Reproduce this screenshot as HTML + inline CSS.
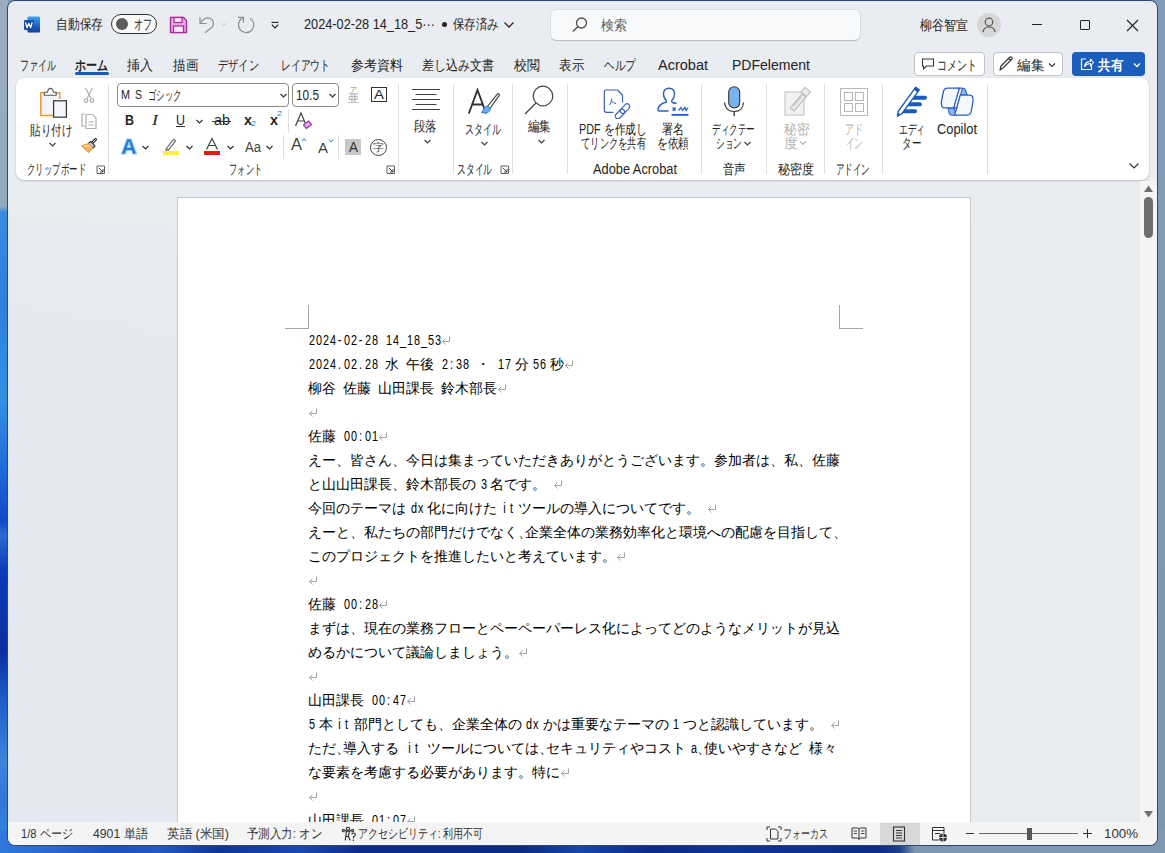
<!DOCTYPE html><html lang="ja"><head><meta charset="utf-8"><title>Word</title>
<style>
*{margin:0;padding:0;box-sizing:border-box}
html,body{width:1165px;height:853px;overflow:hidden}
body{position:relative;font-family:"Liberation Sans",sans-serif;color:#242424;font-size:14px;
 background:#7f9bb3}
.abs{position:absolute}
#deskL{position:absolute;left:0;top:0;width:8px;height:853px;background:linear-gradient(180deg,#98adbf 0px,#93aabf 206px,#3a8ae0 212px,#2d80dc 300px,#3590e2 400px,#1f6ad8 470px,#1248c8 520px,#2a6ad0 535px,#0c3ab8 570px,#0a2fa0 650px,#1e5cc8 700px,#3a86dc 760px,#2e78d8 800px,#3a88e0 853px)}
#deskB{position:absolute;left:0;top:830px;width:1165px;height:23px;background:linear-gradient(90deg,#2f78dc 0px,#2a68d0 50px,#1c50bc 110px,#2358c0 160px,#0f3496 220px,#1a48b0 300px,#0c2c8c 360px,#0a2a86 470px,#0b2a80 520px,#1646aa 580px,#0a2a88 650px,#0e3494 730px,#0b2c88 880px,#1b3f8a 900px,#7c96ae 915px,#7f9ab0 1165px)}
#deskR{position:absolute;left:1157px;top:0;width:8px;height:853px;background:linear-gradient(180deg,#7f9db5,#7a97ae)}
#win{position:absolute;left:7px;top:0;width:1151px;height:846px;border:1px solid #2c4876;border-radius:8px;
 background:#e9ecf0;overflow:hidden}
#ribbon{position:absolute;left:16px;top:78px;width:1133px;height:102px;background:#fff;border-radius:8px;
 box-shadow:0 1px 2px rgba(0,0,0,.18),0 0 1px rgba(0,0,0,.12)}
#clip{position:absolute;left:8px;top:181px;width:1132px;height:641px;overflow:hidden}
#clipin{position:absolute;left:-8px;top:-181px;width:1165px;height:853px}
.mk{position:absolute}
#page{position:absolute;left:177px;top:197px;width:794px;height:700px;background:#fff;border:1px solid #c8c8c8;border-bottom:none}
#status{position:absolute;left:8px;top:822px;width:1149px;height:23px;background:#f4f4f4;border-radius:0 0 8px 8px}
#sbtrack{position:absolute;left:1140px;top:181px;width:17px;height:641px;background:#f4f4f4}
#canvasbg{position:absolute;left:8px;top:181px;width:1132px;height:641px;background:linear-gradient(180deg,rgba(233,236,240,1) 0px,rgba(233,236,240,0) 160px),linear-gradient(90deg,#e4e8f1 0px,#e6e9f1 170px,#e8ebf0 600px,#e8ecf0 1132px)}
.t{position:absolute;white-space:nowrap;line-height:16px;height:16px}
.t>span{display:inline-block;transform-origin:0 50%}
.sep{position:absolute;width:1px;background:#e0e0e0}
.dl{position:absolute;left:308px;height:24px;line-height:24px;white-space:nowrap;color:#000;font-size:14px}
.dl b,.dl i{display:inline-block;font-weight:normal;font-style:normal;text-align:center;overflow:visible}
.dl b.h{width:7px;font-size:15.5px;transform:scaleX(.7)}
.dl b.c{width:7px;text-align:left;font-size:14px}
.dl b.f{width:14px;font-size:14px}
.dl svg.rt{display:inline-block;vertical-align:top;margin-top:8px}

.st{font-size:13px;color:#333}

</style></head><body>
<div id="deskL"></div><div id="deskR"></div><div id="deskB"></div>
<div id="win"></div>
<!-- title bar -->
<svg class="abs" style="left:22px;top:15px" width="20" height="20" viewBox="0 0 20 20">
 <defs><linearGradient id="wg" x1="0" y1="0" x2="0" y2="1"><stop offset="0" stop-color="#41a5ee"></stop><stop offset=".33" stop-color="#2b7cd3"></stop><stop offset=".66" stop-color="#185abd"></stop><stop offset="1" stop-color="#103f91"></stop></linearGradient></defs>
 <rect x="5.5" y="1.5" width="12.5" height="16" rx="1" fill="url(#wg)"></rect>
 <rect x="2" y="5" width="10" height="10" rx="1" fill="#1a4fa8"></rect>
 <path d="M3.6 7.4 L5 12.6 L6.9 8.6 L8.7 12.6 L10.2 7.4" fill="none" stroke="#fff" stroke-width="1.3" stroke-linejoin="round"></path>
</svg>
<div class="t" style="left:56px;top:16px;width:47px"><span style="transform: scaleX(0.8393);">自動保存</span></div>
<div class="abs" style="left:111px;top:14px;width:46px;height:20px;border:1px solid #333;border-radius:10px;background:#fafafa"></div>
<div class="abs" style="left:116px;top:18px;width:12px;height:12px;border-radius:6px;background:#5c5c5c"></div>
<div class="t" style="left:134px;top:16px;width:18px"><span style="transform: scaleX(0.6429);">オフ</span></div>
<svg class="abs" style="left:169px;top:16px" width="19" height="18" viewBox="0 0 19 18">
 <path d="M1.5 1.5 H14.5 L17.5 4.5 V16.5 H1.5 Z" fill="#eaa8e4" stroke="#a9329f" stroke-width="1.4"></path>
 <rect x="5" y="1.5" width="8" height="5" fill="#fbe8f8" stroke="#a9329f" stroke-width="1.3"></rect>
 <rect x="4.5" y="10" width="10" height="6.5" fill="#fbe8f8" stroke="#a9329f" stroke-width="1.3"></rect>
</svg>
<svg class="abs" style="left:199px;top:15px" width="30" height="20" viewBox="0 0 30 20">
 <path d="M1 2.3 V8.5 H7.6" fill="none" stroke="#8c8c8c" stroke-width="1.2"></path>
 <path d="M1.5 8 C4 3.5 8 2 11 3.3 C14.8 5 15.5 9 13 12.2 L6 17.8" fill="none" stroke="#8c8c8c" stroke-width="1.2"></path>
 <path d="M21.5 8.2 L24.5 10.6 L27.5 8.2" fill="none" stroke="#c4c4c4" stroke-width="1"></path>
</svg>
<svg class="abs" style="left:236px;top:15px" width="20" height="20" viewBox="0 0 20 20">
 <path d="M2 2.35 H7.4 V7.5" fill="none" stroke="#8c8c8c" stroke-width="1.2"></path>
 <path d="M14.2 3.3 A7.7 7.7 0 1 1 6.6 3" fill="none" stroke="#8c8c8c" stroke-width="1.2"></path>
</svg>
<svg class="abs" style="left:269px;top:19px" width="12" height="12" viewBox="0 0 12 12">
 <path d="M2.5 3.4 H9.5" stroke="#222" stroke-width="1.1"></path><path d="M2.8 5.6 L6 8.8 L9.2 5.6" fill="none" stroke="#222" stroke-width="1.2"></path>
</svg>
<div class="t" style="left:304px;top:16px;width:131px"><span style="transform: scaleX(0.9097);">2024-02-28 14_18_5···</span></div>
<div class="abs" style="left:442px;top:22px;width:5px;height:5px;border-radius:3px;background:#242424"></div>
<div class="t" style="left:453px;top:16px;width:46px"><span style="transform: scaleX(0.8214);">保存済み</span></div>
<svg class="abs" style="left:503px;top:19px" width="12" height="12" viewBox="0 0 12 12"><path d="M1.5 3.5 L6 8 L10.5 3.5" fill="none" stroke="#242424" stroke-width="1.3"></path></svg>
<div class="abs" style="left:551px;top:10px;width:309px;height:30px;background:#f8f9fa;border-radius:5px;box-shadow:0 1px 1px rgba(0,0,0,.16),0 0 0 1px rgba(0,0,0,.05)"></div>
<svg class="abs" style="left:571px;top:16px" width="18" height="18" viewBox="0 0 18 18"><circle cx="10.5" cy="7" r="5" fill="none" stroke="#505050" stroke-width="1.3"></circle><path d="M7 10.5 L2 15.5" stroke="#505050" stroke-width="1.4"></path></svg>
<div class="t" style="left:601px;top:17px;width:26px;color:#616161"><span style="transform: scaleX(0.9286);">検索</span></div>
<div class="t" style="left:920px;top:17px;width:48px"><span style="transform: scaleX(0.8571);">柳谷智宣</span></div>
<div class="abs" style="left:977px;top:13px;width:24px;height:24px;border-radius:12px;background:#d6d6d6"></div>
<svg class="abs" style="left:977px;top:13px" width="24" height="24" viewBox="0 0 24 24"><circle cx="12" cy="9" r="3.8" fill="none" stroke="#555" stroke-width="1.2"></circle><path d="M6 19 C6.5 15.5 9 14 12 14 C15 14 17.5 15.5 18 19" fill="none" stroke="#555" stroke-width="1.2"></path></svg>
<div class="abs" style="left:1032px;top:24px;width:10px;height:1px;background:#222"></div>
<div class="abs" style="left:1080px;top:20px;width:10px;height:10px;border:1px solid #222;border-radius:1px"></div>
<svg class="abs" style="left:1126px;top:19px" width="13" height="13" viewBox="0 0 13 13"><path d="M1 1 L12 12 M12 1 L1 12" stroke="#222" stroke-width="1.1"></path></svg>
<!-- tabs -->
<div class="t" style="left:20px;top:57px;width:36px"><span style="transform: scaleX(0.6429);">ファイル</span></div>
<div class="t" style="left:75px;top:57px;width:33px;font-weight:bold"><span style="transform: scaleX(0.7857);">ホーム</span></div>
<div class="abs" style="left:75px;top:72px;width:34px;height:3px;border-radius:2px;background:#185abd"></div>
<div class="t" style="left:127px;top:57px;width:26px"><span style="transform: scaleX(0.9286);">挿入</span></div>
<div class="t" style="left:173px;top:57px;width:25px"><span style="transform: scaleX(0.8929);">描画</span></div>
<div class="t" style="left:218px;top:57px;width:41px"><span style="transform: scaleX(0.7321);">デザイン</span></div>
<div class="t" style="left:281px;top:57px;width:49px"><span style="transform: scaleX(0.7);">レイアウト</span></div>
<div class="t" style="left:351px;top:57px;width:52px"><span style="transform: scaleX(0.9286);">参考資料</span></div>
<div class="t" style="left:422px;top:57px;width:72px"><span style="transform: scaleX(0.8571);">差し込み文書</span></div>
<div class="t" style="left:514px;top:57px;width:26px"><span style="transform: scaleX(0.9286);">校閲</span></div>
<div class="t" style="left:559px;top:57px;width:25px"><span style="transform: scaleX(0.8929);">表示</span></div>
<div class="t" style="left:604px;top:57px;width:32px"><span style="transform: scaleX(0.7619);">ヘルプ</span></div>
<div class="t" style="left:658px;top:57px;width:50px"><span style="transform: scaleX(1.0363);">Acrobat</span></div>
<div class="t" style="left:732px;top:57px;width:78px"><span style="transform: scaleX(1.0024);">PDFelement</span></div>
<div class="abs" style="left:914px;top:52px;width:71px;height:24px;border:1px solid #c2c2c2;border-radius:4px;background:#fff"></div>
<svg class="abs" style="left:921px;top:57px" width="14" height="14" viewBox="0 0 14 14"><path d="M1.5 2 H12.5 V9 H5.5 L2.5 12 V9 H1.5 Z" fill="none" stroke="#333" stroke-width="1.1"></path></svg>
<div class="t" style="left:937px;top:57px;width:40px"><span style="transform: scaleX(0.7143);">コメント</span></div>
<div class="abs" style="left:993px;top:52px;width:70px;height:24px;border:1px solid #c2c2c2;border-radius:4px;background:#fff"></div>
<svg class="abs" style="left:997px;top:55px" width="18" height="18" viewBox="0 0 18 18"><path d="M3 15 L4 11 L13 2 C14 1.2 15.8 3 15 4 L6 13 Z M11.5 3.5 L13.5 5.5" fill="none" stroke="#333" stroke-width="1.2" stroke-linejoin="round"></path></svg>
<div class="t" style="left:1017px;top:57px;width:27px"><span style="transform: scaleX(0.9643);">編集</span></div>
<svg class="abs" style="left:1047px;top:60px" width="10" height="10" viewBox="0 0 10 10"><path d="M2 3.5 L5 6.5 L8 3.5" fill="none" stroke="#333" stroke-width="1.2"></path></svg>
<div class="abs" style="left:1072px;top:52px;width:73px;height:24px;border-radius:4px;background:#1b5ebe"></div>
<svg class="abs" style="left:1079px;top:56px" width="16" height="16" viewBox="0 0 16 16"><path d="M7 3 H2.5 V13.5 H12.5 V9.5" fill="none" stroke="#fff" stroke-width="1.2"></path><path d="M5.5 10.5 C6 7 8.5 5.5 11.5 5.5 V3 L14.5 6.5 L11.5 10 V7.5 C9 7.5 7 8.5 5.5 10.5 Z" fill="none" stroke="#fff" stroke-width="1.1" stroke-linejoin="round"></path></svg>
<div class="t" style="left:1098px;top:57px;width:25px;color:#fff;font-weight:bold"><span style="transform: scaleX(0.8929);">共有</span></div>
<svg class="abs" style="left:1132px;top:60px" width="10" height="10" viewBox="0 0 10 10"><path d="M2 3.5 L5 6.5 L8 3.5" fill="none" stroke="#fff" stroke-width="1.3"></path></svg>
<div id="canvasbg"></div>
<div id="ribbon"></div>
<!-- clipboard group -->
<svg class="abs" style="left:38px;top:86px" width="30" height="33" viewBox="0 0 30 33">
 <path d="M15 29.6 H2.8 V6.8 H21.8 V13" fill="#f3f5fb" stroke="#eb9c2f" stroke-width="1.5"></path>
 <path d="M6.3 9.3 V6.3 H9.5 C10 3.5 10.8 2.4 12.5 2.4 C14.2 2.4 15 3.5 15.5 6.3 H18.2 V9.3 Z" fill="#fff" stroke="#5a5a5a" stroke-width="1.1" stroke-linejoin="round"></path>
 <rect x="15.6" y="14.8" width="12.8" height="16.4" fill="#f4f6fb" stroke="#333" stroke-width="1.2"></rect>
</svg>
<div class="t" style="left:30px;top:122px;width:42px"><span style="transform: scaleX(0.75);">貼り付け</span></div>
<svg class="abs" style="left:48px;top:140px" width="9" height="9" viewBox="0 0 9 9"><path d="M1.5 3 L4.5 6 L7.5 3" fill="none" stroke="#424242" stroke-width="1.2"></path></svg>
<svg class="abs" style="left:81px;top:87px" width="16" height="17" viewBox="0 0 16 17"><path d="M4.5 1 L10 11.5 M11.5 1 L6 11.5" stroke="#a8a8a8" stroke-width="1.1"></path><rect x="3.3" y="11.7" width="3.4" height="3.4" rx="1.2" fill="none" stroke="#a8a8a8" stroke-width="1.1"></rect><rect x="9.3" y="11.7" width="3.4" height="3.4" rx="1.2" fill="none" stroke="#a8a8a8" stroke-width="1.1"></rect></svg>
<svg class="abs" style="left:80px;top:111px" width="18" height="19" viewBox="0 0 18 19"><path d="M4.5 3 H2 V15 H5" fill="none" stroke="#b0b0b0" stroke-width="1.2"></path><path d="M6 3.5 H12.5 L16 7 V17.5 H6 Z" fill="#fff" stroke="#b0b0b0" stroke-width="1.2"></path><path d="M8.5 11 H13.5 M8.5 14 H13.5" stroke="#b0b0b0" stroke-width="1.1"></path></svg>
<svg class="abs" style="left:81px;top:138px" width="17" height="16" viewBox="0 0 17 16"><path d="M10.5 5.5 L14.5 1.5" stroke="#333" stroke-width="3" stroke-linecap="round"></path><path d="M10.5 5.5 L14.5 1.5" stroke="#ddd" stroke-width="1" stroke-linecap="round"></path><path d="M7.5 5.5 L9.5 3.5 L14 8 L12 10 Z" fill="#e8e8e8" stroke="#333" stroke-width="1.1" stroke-linejoin="round"></path><path d="M0.8 7.8 L7.5 5.6 L12 10 L7.5 14.8 Z" fill="#f7b45a" stroke="#e38a2a" stroke-width="1" stroke-linejoin="round"></path><path d="M3 8 L8 7.5 L10 10" fill="none" stroke="#fde3c0" stroke-width="1.2"></path></svg>
<div class="t" style="left:27px;top:161px;width:59px"><span style="transform: scaleX(0.602);">クリップボード</span></div>
<svg class="abs" style="left:96px;top:165px" width="10" height="10" viewBox="0 0 10 10"><path d="M1 8.5 V1 H8.5 V8.5 H1" fill="none" stroke="#616161" stroke-width="1"></path><path d="M3 3 L7 7 M4 7 H7 V4" fill="none" stroke="#424242" stroke-width="1"></path></svg>
<div class="sep" style="left:108px;top:84px;height:90px"></div>
<!-- font group -->
<div class="abs" style="left:117px;top:83px;width:172px;height:24px;border:1px solid #8a8a8a;border-radius:4px;background:#fff"></div>
<div class="t" style="left:121px;top:87px;width:9px;font-size:13px"><span style="transform: scaleX(0.83);">M</span></div><div class="t" style="left:134.5px;top:87px;width:7px;font-size:13px"><span style="transform: scaleX(0.8072);">S</span></div><div class="t" style="left:148px;top:87px;width:34px"><span style="transform: scaleX(0.6071);">ゴシック</span></div>
<svg class="abs" style="left:279px;top:91px" width="9" height="9" viewBox="0 0 9 9"><path d="M1.5 3 L4.5 6 L7.5 3" fill="none" stroke="#333" stroke-width="1.2"></path></svg>
<div class="abs" style="left:292px;top:83px;width:47px;height:24px;border:1px solid #8a8a8a;border-radius:4px;background:#fff"></div>
<div class="t" style="left:296px;top:87px;width:23px"><span style="transform: scaleX(0.844);">10.5</span></div>
<svg class="abs" style="left:328px;top:91px" width="9" height="9" viewBox="0 0 9 9"><path d="M1.5 3 L4.5 6 L7.5 3" fill="none" stroke="#333" stroke-width="1.2"></path></svg>
<div class="t" style="left:350px;top:86px;width:7px;height:8px;line-height:8px;font-size:7px;color:#777"><span style="transform: scaleX(1);">ア</span></div><div class="t" style="left:348px;top:93px;width:11px;height:11px;line-height:11px;font-size:11px;color:#999"><span style="transform: scaleX(1);">亜</span></div>
<div class="abs" style="left:371px;top:87px;width:16px;height:15px;border:1px solid #333"></div>
<div class="t" style="left:374px;top:87px;width:10px;height:15px;line-height:15px;font-size:13px"><span style="transform: scaleX(1.1532);">A</span></div>
<div class="t" style="left:125px;top:112px;width:9px;font-weight:bold;font-size:14px"><span style="transform: scaleX(0.8889);">B</span></div>
<div class="t" style="left:152px;top:112px;width:6px;font-style:italic;font-family:'Liberation Serif',serif;font-size:15px"><span style="transform: scaleX(1.2);">I</span></div>
<div class="t" style="left:176px;top:112px;width:9px;font-size:14px"><span style="transform: scaleX(0.8889);">U</span></div>
<div class="abs" style="left:176px;top:126px;width:9px;height:1px;background:#333"></div>
<svg class="abs" style="left:195px;top:117px" width="9" height="9" viewBox="0 0 9 9"><path d="M1.5 3 L4.5 6 L7.5 3" fill="none" stroke="#333" stroke-width="1.2"></path></svg>
<div class="t" style="left:214px;top:112px;width:16px;font-size:14px"><span style="transform: scaleX(1.0271);">ab</span></div>
<div class="abs" style="left:212px;top:121px;width:19px;height:1px;background:#333"></div>
<div class="t" style="left:244px;top:112px;width:8px;font-weight:bold"><span style="transform: scaleX(1.0261);">x</span></div>
<div class="t" style="left:251px;top:119px;width:5px;font-size:8px;color:#1e7dc0;line-height:10px;height:10px"><span style="transform: scaleX(1.1228);">2</span></div>
<div class="t" style="left:270px;top:112px;width:8px;font-weight:bold"><span style="transform: scaleX(1.0261);">x</span></div>
<div class="t" style="left:277px;top:109px;width:5px;font-size:8px;color:#1e7dc0;line-height:10px;height:10px"><span style="transform: scaleX(1.1228);">2</span></div>
<div class="sep" style="left:288px;top:109px;height:24px"></div>
<svg class="abs" style="left:294px;top:111px" width="19" height="19" viewBox="0 0 19 19"><path d="M1.5 15 L7 2 L12.5 15 M3.5 10 H10.5" fill="none" stroke="#424242" stroke-width="1.2"></path><path d="M9.5 14 L14.5 10 L17.5 13.5 L12.5 17.5 Z" fill="#dcb0ea" stroke="#a33fb5" stroke-width="1.3" stroke-linejoin="round"></path></svg>
<svg class="abs" style="left:120px;top:137px" width="18" height="19" viewBox="0 0 18 19"><path d="M1.5 17 L7 2 H11 L16.5 17 H12.8 L11.6 13.3 H6.4 L5.2 17 Z M7.3 10.5 H10.7 L9 5.2 Z" fill="#1f77d0" stroke="#8cc4f2" stroke-width="1.2" stroke-linejoin="round"></path></svg>
<svg class="abs" style="left:141px;top:143px" width="9" height="9" viewBox="0 0 9 9"><path d="M1.5 3 L4.5 6 L7.5 3" fill="none" stroke="#333" stroke-width="1.2"></path></svg>
<svg class="abs" style="left:161px;top:137px" width="20" height="19" viewBox="0 0 20 19"><path d="M5 12 L12 3 C13 2 15 3.5 14 4.7 L7.5 13 Z" fill="#fff" stroke="#616161" stroke-width="1.2" stroke-linejoin="round"></path><path d="M5 12 L4 14 L7.5 13" fill="#616161"></path><rect x="2" y="14" width="16" height="4" fill="#ffef3a"></rect></svg>
<svg class="abs" style="left:185px;top:143px" width="9" height="9" viewBox="0 0 9 9"><path d="M1.5 3 L4.5 6 L7.5 3" fill="none" stroke="#333" stroke-width="1.2"></path></svg>
<svg class="abs" style="left:203px;top:137px" width="18" height="19" viewBox="0 0 18 19"><path d="M3.5 12.5 L9 1.5 L14.5 12.5 M5.5 8.5 H12.5" fill="none" stroke="#424242" stroke-width="1.2"></path><rect x="1" y="14" width="16" height="4" fill="#e01919"></rect></svg>
<svg class="abs" style="left:226px;top:143px" width="9" height="9" viewBox="0 0 9 9"><path d="M1.5 3 L4.5 6 L7.5 3" fill="none" stroke="#333" stroke-width="1.2"></path></svg>
<div class="t" style="left:245px;top:139px;width:16px;font-size:14px;color:#424242"><span style="transform: scaleX(0.9343);">Aa</span></div>
<svg class="abs" style="left:265px;top:143px" width="9" height="9" viewBox="0 0 9 9"><path d="M1.5 3 L4.5 6 L7.5 3" fill="none" stroke="#333" stroke-width="1.2"></path></svg>
<div class="sep" style="left:283px;top:135px;height:24px"></div>
<div class="t" style="left:291px;top:137px;width:11px;font-size:16px;color:#424242"><span style="transform: scaleX(1.0307);">A</span></div>
<svg class="abs" style="left:301px;top:137px" width="6" height="5" viewBox="0 0 6 5"><path d="M1 4 L3 1.5 L5 4" fill="none" stroke="#2c7fd1" stroke-width="1"></path></svg>
<div class="t" style="left:318px;top:140px;width:10px;font-size:14px;color:#424242"><span style="transform: scaleX(1.0702);">A</span></div>
<svg class="abs" style="left:328px;top:138px" width="6" height="5" viewBox="0 0 6 5"><path d="M1 1.5 L3 4 L5 1.5" fill="none" stroke="#2c7fd1" stroke-width="1"></path></svg>
<div class="sep" style="left:338px;top:135px;height:24px"></div>
<div class="abs" style="left:345px;top:139px;width:16px;height:16px;background:#c8c8c8"></div>
<div class="t" style="left:349px;top:139px;width:9px;font-size:14px;color:#333"><span style="transform: scaleX(0.9632);">A</span></div>
<div class="abs" style="left:370px;top:139px;width:17px;height:17px;border:1.2px solid #424242;border-radius:50%"></div><div class="t" style="left:373px;top:140px;width:11px;height:15px;line-height:15px;font-size:11px;color:#424242"><span style="transform: scaleX(1);">字</span></div>
<div class="t" style="left:229px;top:161px;width:33px"><span style="transform: scaleX(0.5893);">フォント</span></div>
<svg class="abs" style="left:386px;top:165px" width="10" height="10" viewBox="0 0 10 10"><path d="M1 8.5 V1 H8.5 V8.5 H1" fill="none" stroke="#616161" stroke-width="1"></path><path d="M3 3 L7 7 M4 7 H7 V4" fill="none" stroke="#424242" stroke-width="1"></path></svg>
<div class="sep" style="left:398px;top:84px;height:90px"></div>
<!-- paragraph -->
<svg class="abs" style="left:411px;top:87px" width="30" height="24" viewBox="0 0 30 24"><path d="M1 2.5 H29 M4.5 7.5 H25.5 M1 12.5 H29 M4.5 17.5 H25.5 M1 22.5 H29" stroke="#424242" stroke-width="1.2"></path></svg>
<div class="t" style="left:414px;top:118px;width:23px"><span style="transform: scaleX(0.8214);">段落</span></div>
<svg class="abs" style="left:423px;top:137px" width="9" height="9" viewBox="0 0 9 9"><path d="M1.5 3 L4.5 6 L7.5 3" fill="none" stroke="#424242" stroke-width="1.2"></path></svg>
<div class="sep" style="left:453px;top:84px;height:90px"></div>
<!-- styles -->
<svg class="abs" style="left:467px;top:88px" width="34" height="28" viewBox="0 0 34 28"><path d="M1.8 25.5 L10.5 2 L19.2 25.5 M5.3 16.5 H15.7" fill="none" stroke="#333" stroke-width="1.9"></path><path d="M20.5 18.5 L30.5 6 C31.5 5 33 6.2 32.2 7.3 L23 20.5" fill="#fff" stroke="#424242" stroke-width="1.2"></path><path d="M20.5 18 C17 18.5 16.5 22 14.5 24.5 C18.5 26 23 24.5 23.5 20.5 Z" fill="#6aaaf0" stroke="#2c7fd1" stroke-width="1"></path></svg>
<div class="t" style="left:465px;top:121px;width:36px"><span style="transform: scaleX(0.6429);">スタイル</span></div>
<svg class="abs" style="left:480px;top:139px" width="9" height="9" viewBox="0 0 9 9"><path d="M1.5 3 L4.5 6 L7.5 3" fill="none" stroke="#424242" stroke-width="1.2"></path></svg>
<div class="t" style="left:457px;top:161px;width:35px"><span style="transform: scaleX(0.625);">スタイル</span></div>
<svg class="abs" style="left:500px;top:165px" width="10" height="10" viewBox="0 0 10 10"><path d="M1 8.5 V1 H8.5 V8.5 H1" fill="none" stroke="#616161" stroke-width="1"></path><path d="M3 3 L7 7 M4 7 H7 V4" fill="none" stroke="#424242" stroke-width="1"></path></svg>
<div class="sep" style="left:512px;top:84px;height:90px"></div>
<!-- editing -->
<svg class="abs" style="left:523px;top:85px" width="33" height="31" viewBox="0 0 33 31"><circle cx="20" cy="11" r="9.8" fill="none" stroke="#424242" stroke-width="1.2"></circle><path d="M13 18 L2 29" stroke="#424242" stroke-width="1.3"></path></svg>
<div class="t" style="left:528px;top:118px;width:23px"><span style="transform: scaleX(0.8214);">編集</span></div>
<svg class="abs" style="left:537px;top:137px" width="9" height="9" viewBox="0 0 9 9"><path d="M1.5 3 L4.5 6 L7.5 3" fill="none" stroke="#424242" stroke-width="1.2"></path></svg>
<div class="sep" style="left:567px;top:84px;height:90px"></div>
<!-- acrobat -->
<svg class="abs" style="left:602px;top:89px" width="30" height="30" viewBox="0 0 30 30"><path d="M11.5 23.3 H4.3 Q2.3 23.3 2.3 21.3 V3 Q2.3 1 4.3 1 H15.5 L20.5 6 V13.5" fill="none" stroke="#3b5fbf" stroke-width="1.2" stroke-linejoin="round"></path><path d="M7.5 16 Q9.5 13.5 9.8 9.5 M9.8 12.5 Q11.5 14 14 14.5" fill="none" stroke="#3b5fbf" stroke-width="1"></path><rect x="-2.6" y="-5.6" width="5.2" height="11.2" rx="2.6" fill="#fff" stroke="#3b5fbf" stroke-width="1.2" transform="translate(18,25) rotate(45)"></rect><rect x="-2.6" y="-5.6" width="5.2" height="11.2" rx="2.6" fill="none" stroke="#3b5fbf" stroke-width="1.2" transform="translate(23,19.6) rotate(45)"></rect></svg>
<div class="t" style="left:579px;top:121px;width:68px"><span style="transform: scaleX(0.7737);">PDF を作成し</span></div>
<div class="t" style="left:581px;top:135px;width:65px"><span style="transform: scaleX(0.6633);">てリンクを共有</span></div>
<svg class="abs" style="left:656px;top:86px" width="34" height="32" viewBox="0 0 34 32"><path d="M12.6 25 H3.2 Q1.8 25 2 23.5 Q3 18 9.5 16.3 Q10.8 15.8 10.3 14.5 Q7.5 12 7.5 8 Q7.5 2.2 13 2.2 Q18.5 2.2 18.5 8 Q18.5 12 15.8 14.5 Q15.2 15.8 16.5 16.5 Q18.5 17.3 20.6 17.4" fill="none" stroke="#2260c8" stroke-width="1.4" stroke-linejoin="round"></path><path d="M16.6 21.5 L19.6 24.7 M19.6 21.5 L16.6 24.7" stroke="#2260c8" stroke-width="1.3"></path><path d="M22.5 24.5 L25 21.5 L26.5 24.5 L29 21.5 L30.2 24.5 L32 21.5" fill="none" stroke="#2260c8" stroke-width="1.2"></path><rect x="15.5" y="28" width="17" height="1.8" fill="#2260c8"></rect></svg>
<div class="t" style="left:662px;top:121px;width:22px"><span style="transform: scaleX(0.7857);">署名</span></div>
<div class="t" style="left:657px;top:135px;width:32px"><span style="transform: scaleX(0.7619);">を依頼</span></div>
<div class="t" style="left:593px;top:161px;width:84px"><span style="transform: scaleX(0.9144);">Adobe Acrobat</span></div>
<div class="sep" style="left:701px;top:84px;height:90px"></div>
<!-- dictate -->
<svg class="abs" style="left:723px;top:86px" width="22" height="31" viewBox="0 0 22 31"><rect x="5.7" y="0.8" width="11" height="21.2" rx="5.5" fill="#79b3ef" stroke="#333" stroke-width="1.1"></rect><path d="M1.6 16.6 C1.6 22 5.5 25.5 11.2 25.5 C16.8 25.5 20.4 22 20.4 16.6" fill="none" stroke="#333" stroke-width="1.2"></path><path d="M11.2 25.5 V30.3" stroke="#333" stroke-width="1.3"></path></svg>
<div class="t" style="left:712px;top:121px;width:43px"><span style="transform: scaleX(0.6143);">ディクテー</span></div>
<div class="t" style="left:716px;top:135px;width:26px"><span style="transform: scaleX(0.619);">ション</span></div>
<svg class="abs" style="left:743px;top:139px" width="9" height="9" viewBox="0 0 9 9"><path d="M1.5 3 L4.5 6 L7.5 3" fill="none" stroke="#424242" stroke-width="1.1"></path></svg>
<div class="t" style="left:723px;top:161px;width:23px"><span style="transform: scaleX(0.8214);">音声</span></div>
<div class="sep" style="left:766px;top:84px;height:90px"></div>
<!-- sensitivity -->
<svg class="abs" style="left:784px;top:86px" width="28" height="30" viewBox="0 0 28 30"><rect x="1" y="6" width="19" height="23" fill="#f2f2f2" stroke="#c4c4c4" stroke-width="1.1"></rect><path d="M6 22 L18 8 L22 11 L10 25 Z" fill="#e8e8e8" stroke="#bdbdbd" stroke-width="1.1"></path><path d="M17 6 L21 1.5 L26.5 6 L22.5 10.5 Z" fill="#eee" stroke="#bdbdbd" stroke-width="1.1"></path><path d="M9 20 L17 11" stroke="#bdbdbd" stroke-width="1.1"></path></svg>
<div class="t" style="left:784px;top:121px;width:25px;color:#b0b0b0"><span style="transform: scaleX(0.8929);">秘密</span></div>
<div class="t" style="left:784px;top:135px;width:14px;color:#b0b0b0"><span style="transform: scaleX(1);">度</span></div>
<svg class="abs" style="left:799px;top:139px" width="8" height="8" viewBox="0 0 8 8"><path d="M1 2.5 L4 5.5 L7 2.5" fill="none" stroke="#b0b0b0" stroke-width="1.1"></path></svg>
<div class="t" style="left:778px;top:161px;width:36px"><span style="transform: scaleX(0.8571);">秘密度</span></div>
<div class="sep" style="left:824px;top:84px;height:90px"></div>
<!-- addin -->
<svg class="abs" style="left:840px;top:88px" width="28" height="28" viewBox="0 0 28 28"><rect x=".5" y=".5" width="27" height="27" fill="none" stroke="#b8b8b8" stroke-width="1"></rect><rect x="4.5" y="4.5" width="8" height="8" fill="none" stroke="#b8b8b8"></rect><rect x="15.5" y="4.5" width="8" height="8" fill="none" stroke="#b8b8b8"></rect><rect x="4.5" y="15.5" width="8" height="8" fill="none" stroke="#b8b8b8"></rect><rect x="15.5" y="15.5" width="8" height="8" fill="none" stroke="#b8b8b8"></rect></svg>
<div class="t" style="left:845px;top:121px;width:18px;color:#b0b0b0"><span style="transform: scaleX(0.6429);">アド</span></div>
<div class="t" style="left:846px;top:135px;width:17px;color:#b0b0b0"><span style="transform: scaleX(0.6071);">イン</span></div>
<div class="t" style="left:836px;top:161px;width:34px"><span style="transform: scaleX(0.6071);">アドイン</span></div>
<div class="sep" style="left:882px;top:84px;height:90px"></div>
<!-- editor -->
<svg class="abs" style="left:896px;top:86px" width="32" height="32" viewBox="0 0 32 32"><path d="M16 11.85 H29 M10.5 18.25 H24 M5.5 25.15 H19" stroke="#185abd" stroke-width="4" stroke-linecap="round"></path><path d="M1.3 30.3 L2.1 25.5 L19.7 1.2 L23.3 3.8 L5.6 28 Z" fill="#fff" stroke="#185abd" stroke-width="1.3" stroke-linejoin="round"></path><path d="M19.7 1.2 L23.3 3.8 L21.5 6.3 L17.9 3.7 Z M1.3 30.3 L2.1 26.5 L4.6 28.3 Z" fill="#185abd"></path></svg>
<div class="t" style="left:899px;top:121px;width:26px"><span style="transform: scaleX(0.619);">エディ</span></div>
<div class="t" style="left:902px;top:135px;width:19px"><span style="transform: scaleX(0.6786);">ター</span></div>
<svg class="abs" style="left:940px;top:86px" width="34" height="31" viewBox="0 0 34 31"><path d="M17.5 2.2 H23.4 Q25 2.2 25.7 4.5 L27.2 9.1 H20 Z" fill="#8fb3ee" stroke="#2a5cc0" stroke-width="1.1" stroke-linejoin="round"></path><path d="M8 21.9 H14 L16.5 29.2 H12 Q9.5 29.2 9 26.5 Z" fill="#8fb3ee" stroke="#2a5cc0" stroke-width="1.1" stroke-linejoin="round"></path><path d="M7.5 2.2 H19.5 L13.8 21.9 H4.1 Q1 21.9 1.4 15.3 L3.3 6 Q4.2 2.2 7.5 2.2 Z" fill="#f4f8ff" stroke="#2a5cc0" stroke-width="1.3" stroke-linejoin="round"></path><path d="M19.5 2.2 L22.5 2.2 L16.8 21.9 L13.8 21.9 Z" fill="#fff" stroke="#2a5cc0" stroke-width="1.1" stroke-linejoin="round"></path><path d="M20.2 9.1 H30 Q33.5 9.1 33 15.3 L31.3 25 Q30.5 29.2 27.3 29.2 H14.5 L16.8 21.9 Z" fill="#f4f8ff" stroke="#2a5cc0" stroke-width="1.3" stroke-linejoin="round"></path></svg>
<div class="t" style="left:937px;top:121px;width:40px"><span style="transform: scaleX(0.9176);">Copilot</span></div>
<div class="sep" style="left:987px;top:84px;height:90px"></div>
<svg class="abs" style="left:1128px;top:161px" width="12" height="10" viewBox="0 0 12 10"><path d="M1.5 2.5 L6 7 L10.5 2.5" fill="none" stroke="#333" stroke-width="1.2"></path></svg>

<div id="clip"><div id="clipin"><div id="page"></div><div class="mk" style="left:285px;top:305px;width:24px;height:24px;border-right:1px solid #a6a6a6;border-bottom:1px solid #a6a6a6"></div><div class="mk" style="left:839px;top:305px;width:24px;height:24px;border-left:1px solid #a6a6a6;border-bottom:1px solid #a6a6a6"></div><div class="dl" style="top:328px"><b class="h">2</b><b class="h">0</b><b class="h">2</b><b class="h">4</b><b class="h">-</b><b class="h">0</b><b class="h">2</b><b class="h">-</b><b class="h">2</b><b class="h">8</b><i style="width:7px"></i><b class="h">1</b><b class="h">4</b><b class="h">_</b><b class="h">1</b><b class="h">8</b><b class="h">_</b><b class="h">5</b><b class="h">3</b><svg class="rt" width="11" height="10" viewBox="0 0 11 10"><path d="M8.5 0.5 V5.5 H1.5 M4.5 2.5 L1.5 5.5 L4.5 8.5" fill="none" stroke="#a4a4a4" stroke-width="1"></path></svg></div>
<div class="dl" style="top:352px"><b class="h">2</b><b class="h">0</b><b class="h">2</b><b class="h">4</b><b class="h">.</b><b class="h">0</b><b class="h">2</b><b class="h">.</b><b class="h">2</b><b class="h">8</b><i style="width:7px"></i><b class="f">水</b><i style="width:7px"></i><b class="f">午</b><b class="f">後</b><i style="width:7px"></i><b class="h">2</b><b class="h">:</b><b class="h">3</b><b class="h">8</b><i style="width:7px"></i><b class="f">・</b><i style="width:7px"></i><b class="h">1</b><b class="h">7</b><i style="width:3.5px"></i><b class="f">分</b><i style="width:3.5px"></i><b class="h">5</b><b class="h">6</b><i style="width:3.5px"></i><b class="f">秒</b><svg class="rt" width="11" height="10" viewBox="0 0 11 10"><path d="M8.5 0.5 V5.5 H1.5 M4.5 2.5 L1.5 5.5 L4.5 8.5" fill="none" stroke="#a4a4a4" stroke-width="1"></path></svg></div>
<div class="dl" style="top:376px"><b class="f">柳</b><b class="f">谷</b><i style="width:7px"></i><b class="f">佐</b><b class="f">藤</b><i style="width:7px"></i><b class="f">山</b><b class="f">田</b><b class="f">課</b><b class="f">長</b><i style="width:7px"></i><b class="f">鈴</b><b class="f">木</b><b class="f">部</b><b class="f">長</b><svg class="rt" width="11" height="10" viewBox="0 0 11 10"><path d="M8.5 0.5 V5.5 H1.5 M4.5 2.5 L1.5 5.5 L4.5 8.5" fill="none" stroke="#a4a4a4" stroke-width="1"></path></svg></div>
<div class="dl" style="top:400px"><svg class="rt" width="11" height="10" viewBox="0 0 11 10"><path d="M8.5 0.5 V5.5 H1.5 M4.5 2.5 L1.5 5.5 L4.5 8.5" fill="none" stroke="#a4a4a4" stroke-width="1"></path></svg></div>
<div class="dl" style="top:424px"><b class="f">佐</b><b class="f">藤</b><i style="width:7px"></i><b class="h">0</b><b class="h">0</b><b class="h">:</b><b class="h">0</b><b class="h">1</b><svg class="rt" width="11" height="10" viewBox="0 0 11 10"><path d="M8.5 0.5 V5.5 H1.5 M4.5 2.5 L1.5 5.5 L4.5 8.5" fill="none" stroke="#a4a4a4" stroke-width="1"></path></svg></div>
<div class="dl" style="top:448px"><b class="f">え</b><b class="f">ー</b><b class="f">、</b><b class="f">皆</b><b class="f">さ</b><b class="f">ん</b><b class="f">、</b><b class="f">今</b><b class="f">日</b><b class="f">は</b><b class="f">集</b><b class="f">ま</b><b class="f">っ</b><b class="f">て</b><b class="f">い</b><b class="f">た</b><b class="f">だ</b><b class="f">き</b><b class="f">あ</b><b class="f">り</b><b class="f">が</b><b class="f">と</b><b class="f">う</b><b class="f">ご</b><b class="f">ざ</b><b class="f">い</b><b class="f">ま</b><b class="f">す</b><b class="f">。</b><b class="f">参</b><b class="f">加</b><b class="f">者</b><b class="f">は</b><b class="f">、</b><b class="f">私</b><b class="f">、</b><b class="f">佐</b><b class="f">藤</b></div>
<div class="dl" style="top:472px"><b class="f">と</b><b class="f">山</b><b class="f">山</b><b class="f">田</b><b class="f">課</b><b class="f">長</b><b class="f">、</b><b class="f">鈴</b><b class="f">木</b><b class="f">部</b><b class="f">長</b><b class="f">の</b><i style="width:3.5px"></i><b class="h">3</b><i style="width:3.5px"></i><b class="f">名</b><b class="f">で</b><b class="f">す</b><b class="f">。</b><i style="width:7px"></i><svg class="rt" width="11" height="10" viewBox="0 0 11 10"><path d="M8.5 0.5 V5.5 H1.5 M4.5 2.5 L1.5 5.5 L4.5 8.5" fill="none" stroke="#a4a4a4" stroke-width="1"></path></svg></div>
<div class="dl" style="top:496px"><b class="f">今</b><b class="f">回</b><b class="f">の</b><b class="f">テ</b><b class="f">ー</b><b class="f">マ</b><b class="f">は</b><i style="width:3.5px"></i><b class="h">d</b><b class="h">x</b><i style="width:3.5px"></i><b class="f">化</b><b class="f">に</b><b class="f">向</b><b class="f">け</b><b class="f">た</b><i style="width:3.5px"></i><b class="h">i</b><b class="h">t</b><i style="width:3.5px"></i><b class="f">ツ</b><b class="f">ー</b><b class="f">ル</b><b class="f">の</b><b class="f">導</b><b class="f">入</b><b class="f">に</b><b class="f">つ</b><b class="f">い</b><b class="f">て</b><b class="f">で</b><b class="f">す</b><b class="f">。</b><i style="width:7px"></i><svg class="rt" width="11" height="10" viewBox="0 0 11 10"><path d="M8.5 0.5 V5.5 H1.5 M4.5 2.5 L1.5 5.5 L4.5 8.5" fill="none" stroke="#a4a4a4" stroke-width="1"></path></svg></div>
<div class="dl" style="top:520px"><b class="f">え</b><b class="f">ー</b><b class="f">と</b><b class="f">、</b><b class="f">私</b><b class="f">た</b><b class="f">ち</b><b class="f">の</b><b class="f">部</b><b class="f">門</b><b class="f">だ</b><b class="f">け</b><b class="f">で</b><b class="f">な</b><b class="f">く</b><b class="c">、</b><b class="f">企</b><b class="f">業</b><b class="f">全</b><b class="f">体</b><b class="f">の</b><b class="f">業</b><b class="f">務</b><b class="f">効</b><b class="f">率</b><b class="f">化</b><b class="f">と</b><b class="f">環</b><b class="f">境</b><b class="f">へ</b><b class="f">の</b><b class="f">配</b><b class="f">慮</b><b class="f">を</b><b class="f">目</b><b class="f">指</b><b class="f">し</b><b class="f">て</b><b class="f">、</b></div>
<div class="dl" style="top:544px"><b class="f">こ</b><b class="f">の</b><b class="f">プ</b><b class="f">ロ</b><b class="f">ジ</b><b class="f">ェ</b><b class="f">ク</b><b class="f">ト</b><b class="f">を</b><b class="f">推</b><b class="f">進</b><b class="f">し</b><b class="f">た</b><b class="f">い</b><b class="f">と</b><b class="f">考</b><b class="f">え</b><b class="f">て</b><b class="f">い</b><b class="f">ま</b><b class="f">す</b><b class="f">。</b><svg class="rt" width="11" height="10" viewBox="0 0 11 10"><path d="M8.5 0.5 V5.5 H1.5 M4.5 2.5 L1.5 5.5 L4.5 8.5" fill="none" stroke="#a4a4a4" stroke-width="1"></path></svg></div>
<div class="dl" style="top:568px"><svg class="rt" width="11" height="10" viewBox="0 0 11 10"><path d="M8.5 0.5 V5.5 H1.5 M4.5 2.5 L1.5 5.5 L4.5 8.5" fill="none" stroke="#a4a4a4" stroke-width="1"></path></svg></div>
<div class="dl" style="top:592px"><b class="f">佐</b><b class="f">藤</b><i style="width:7px"></i><b class="h">0</b><b class="h">0</b><b class="h">:</b><b class="h">2</b><b class="h">8</b><svg class="rt" width="11" height="10" viewBox="0 0 11 10"><path d="M8.5 0.5 V5.5 H1.5 M4.5 2.5 L1.5 5.5 L4.5 8.5" fill="none" stroke="#a4a4a4" stroke-width="1"></path></svg></div>
<div class="dl" style="top:616px"><b class="f">ま</b><b class="f">ず</b><b class="f">は</b><b class="f">、</b><b class="f">現</b><b class="f">在</b><b class="f">の</b><b class="f">業</b><b class="f">務</b><b class="f">フ</b><b class="f">ロ</b><b class="f">ー</b><b class="f">と</b><b class="f">ペ</b><b class="f">ー</b><b class="f">ペ</b><b class="f">ー</b><b class="f">パ</b><b class="f">ー</b><b class="f">レ</b><b class="f">ス</b><b class="f">化</b><b class="f">に</b><b class="f">よ</b><b class="f">っ</b><b class="f">て</b><b class="f">ど</b><b class="f">の</b><b class="f">よ</b><b class="f">う</b><b class="f">な</b><b class="f">メ</b><b class="f">リ</b><b class="f">ッ</b><b class="f">ト</b><b class="f">が</b><b class="f">見</b><b class="f">込</b></div>
<div class="dl" style="top:640px"><b class="f">め</b><b class="f">る</b><b class="f">か</b><b class="f">に</b><b class="f">つ</b><b class="f">い</b><b class="f">て</b><b class="f">議</b><b class="f">論</b><b class="f">し</b><b class="f">ま</b><b class="f">し</b><b class="f">ょ</b><b class="f">う</b><b class="f">。</b><svg class="rt" width="11" height="10" viewBox="0 0 11 10"><path d="M8.5 0.5 V5.5 H1.5 M4.5 2.5 L1.5 5.5 L4.5 8.5" fill="none" stroke="#a4a4a4" stroke-width="1"></path></svg></div>
<div class="dl" style="top:664px"><svg class="rt" width="11" height="10" viewBox="0 0 11 10"><path d="M8.5 0.5 V5.5 H1.5 M4.5 2.5 L1.5 5.5 L4.5 8.5" fill="none" stroke="#a4a4a4" stroke-width="1"></path></svg></div>
<div class="dl" style="top:688px"><b class="f">山</b><b class="f">田</b><b class="f">課</b><b class="f">長</b><i style="width:7px"></i><b class="h">0</b><b class="h">0</b><b class="h">:</b><b class="h">4</b><b class="h">7</b><svg class="rt" width="11" height="10" viewBox="0 0 11 10"><path d="M8.5 0.5 V5.5 H1.5 M4.5 2.5 L1.5 5.5 L4.5 8.5" fill="none" stroke="#a4a4a4" stroke-width="1"></path></svg></div>
<div class="dl" style="top:712px"><b class="h">5</b><i style="width:3.5px"></i><b class="f">本</b><i style="width:3.5px"></i><b class="h">i</b><b class="h">t</b><i style="width:3.5px"></i><b class="f">部</b><b class="f">門</b><b class="f">と</b><b class="f">し</b><b class="f">て</b><b class="f">も</b><b class="f">、</b><b class="f">企</b><b class="f">業</b><b class="f">全</b><b class="f">体</b><b class="f">の</b><i style="width:3.5px"></i><b class="h">d</b><b class="h">x</b><i style="width:3.5px"></i><b class="f">か</b><b class="f">は</b><b class="f">重</b><b class="f">要</b><b class="f">な</b><b class="f">テ</b><b class="f">ー</b><b class="f">マ</b><b class="f">の</b><i style="width:3.5px"></i><b class="h">1</b><i style="width:3.5px"></i><b class="f">つ</b><b class="f">と</b><b class="f">認</b><b class="f">識</b><b class="f">し</b><b class="f">て</b><b class="f">い</b><b class="f">ま</b><b class="f">す</b><b class="f">。</b><i style="width:3.5px"></i><i style="width:3.5px"></i><svg class="rt" width="11" height="10" viewBox="0 0 11 10"><path d="M8.5 0.5 V5.5 H1.5 M4.5 2.5 L1.5 5.5 L4.5 8.5" fill="none" stroke="#a4a4a4" stroke-width="1"></path></svg></div>
<div class="dl" style="top:736px"><b class="f">た</b><b class="f">だ</b><b class="c">、</b><b class="f">導</b><b class="f">入</b><b class="f">す</b><b class="f">る</b><i style="width:7px"></i><b class="h">i</b><b class="h">t</b><i style="width:7px"></i><b class="f">ツ</b><b class="f">ー</b><b class="f">ル</b><b class="f">に</b><b class="f">つ</b><b class="f">い</b><b class="f">て</b><b class="f">は</b><b class="c">、</b><b class="f">セ</b><b class="f">キ</b><b class="f">ュ</b><b class="f">リ</b><b class="f">テ</b><b class="f">ィ</b><b class="f">や</b><b class="f">コ</b><b class="f">ス</b><b class="f">ト</b><i style="width:3.5px"></i><b class="h">a</b><b class="c">、</b><b class="f">使</b><b class="f">い</b><b class="f">や</b><b class="f">す</b><b class="f">さ</b><b class="f">な</b><b class="f">ど</b><i style="width:7px"></i><b class="f">様</b><b class="f">々</b></div>
<div class="dl" style="top:760px"><b class="f">な</b><b class="f">要</b><b class="f">素</b><b class="f">を</b><b class="f">考</b><b class="f">慮</b><b class="f">す</b><b class="f">る</b><b class="f">必</b><b class="f">要</b><b class="f">が</b><b class="f">あ</b><b class="f">り</b><b class="f">ま</b><b class="f">す</b><b class="f">。</b><b class="f">特</b><b class="f">に</b><svg class="rt" width="11" height="10" viewBox="0 0 11 10"><path d="M8.5 0.5 V5.5 H1.5 M4.5 2.5 L1.5 5.5 L4.5 8.5" fill="none" stroke="#a4a4a4" stroke-width="1"></path></svg></div>
<div class="dl" style="top:784px"><svg class="rt" width="11" height="10" viewBox="0 0 11 10"><path d="M8.5 0.5 V5.5 H1.5 M4.5 2.5 L1.5 5.5 L4.5 8.5" fill="none" stroke="#a4a4a4" stroke-width="1"></path></svg></div>
<div class="dl" style="top:808px"><b class="f">山</b><b class="f">田</b><b class="f">課</b><b class="f">長</b><i style="width:7px"></i><b class="h">0</b><b class="h">1</b><b class="h">:</b><b class="h">0</b><b class="h">7</b><svg class="rt" width="11" height="10" viewBox="0 0 11 10"><path d="M8.5 0.5 V5.5 H1.5 M4.5 2.5 L1.5 5.5 L4.5 8.5" fill="none" stroke="#a4a4a4" stroke-width="1"></path></svg></div></div></div>
<div id="sbtrack"></div>
<div id="status"></div>
<div class="t st" style="left:21px;top:826px;width:52px"><span style="transform: scaleX(0.8568);">1/8 ページ</span></div>
<div class="t st" style="left:93px;top:826px;width:55px"><span style="transform: scaleX(0.9394);">4901 単語</span></div>
<div class="t st" style="left:167px;top:826px;width:62px"><span style="transform: scaleX(0.9645);">英語 (米国)</span></div>
<div class="t st" style="left:247px;top:826px;width:75px"><span style="transform: scaleX(0.8799);">予測入力: オン</span></div>
<svg class="abs" style="left:340px;top:826px" width="16" height="16" viewBox="0 0 16 16"><circle cx="7.9" cy="2.8" r="1.6" fill="none" stroke="#222" stroke-width="1.1"></circle><path d="M4.6 5.6 Q2.2 6 2.3 4.4 Q2.6 3 4.5 4 L6.5 5.2 H9.5 L11.5 4 Q13.4 3 13.6 4.4 Q13.6 6 11.3 5.6 M6.4 5.3 L5.8 10.5 L5.2 14.3 M9.3 5.5 L8.4 10.5 L10.2 14.3 M5.8 10.5 H8.4" fill="none" stroke="#222" stroke-width="1.1" stroke-linejoin="round"></path><path d="M11.7 8.3 Q12 7 13.5 7 Q15.3 7 15.3 8.6 Q15.3 9.8 13.6 10.8 L13.3 12.4" fill="none" stroke="#222" stroke-width="1.1"></path><circle cx="13.3" cy="14.2" r=".7" fill="#222"></circle></svg>
<div class="t st" style="left:358px;top:826px;width:125px"><span style="transform: scaleX(0.7658);">アクセシビリティ: 利用不可</span></div>
<svg class="abs" style="left:766px;top:826px" width="16" height="16" viewBox="0 0 16 16"><path d="M1 4 V1 H4 M12 1 H15 V4 M15 12 V15 H12 M4 15 H1 V12" fill="none" stroke="#333" stroke-width="1"></path><path d="M4.5 3 H9.5 L12 5.5 V13 H4.5 Z" fill="none" stroke="#333" stroke-width="1"></path></svg>
<div class="t st" style="left:783px;top:826px;width:45px"><span style="transform: scaleX(0.6923);">フォーカス</span></div>
<svg class="abs" style="left:851px;top:826px" width="16" height="15" viewBox="0 0 16 15"><path d="M1 2 H6.5 C7.5 2 8 2.5 8 3.5 V13.5 C8 12.5 7.5 12 6.5 12 H1 Z M15 2 H9.5 C8.5 2 8 2.5 8 3.5 M15 2 V12 H9.5 C8.5 12 8 12.5 8 13.5" fill="none" stroke="#333" stroke-width="1"></path><path d="M2.5 5 H6 M2.5 7.5 H6 M10 5 H13.5 M10 7.5 H13.5" stroke="#333" stroke-width=".9"></path></svg>
<div class="abs" style="left:880px;top:823px;width:40px;height:22px;background:#d8d8d8"></div>
<svg class="abs" style="left:892px;top:826px" width="15" height="16" viewBox="0 0 15 16"><rect x="1.5" y="1" width="11" height="14" fill="none" stroke="#333" stroke-width="1.1"></rect><path d="M4 4.5 H10 M4 7 H10 M4 9.5 H10 M4 12 H10" stroke="#333" stroke-width="1"></path></svg>
<svg class="abs" style="left:931px;top:826px" width="17" height="16" viewBox="0 0 17 16"><path d="M8 14 H1.5 V1.5 H13 V7" fill="none" stroke="#333" stroke-width="1"></path><path d="M1.5 4.5 H13 M4 7.5 H9" stroke="#333" stroke-width="1"></path><circle cx="12" cy="11.5" r="4" fill="#333"></circle><path d="M8 11.5 H16 M12 7.5 V15.5" stroke="#f3f3f3" stroke-width=".8"></path></svg>
<div class="abs" style="left:966px;top:833px;width:8px;height:1px;background:#333"></div>
<div class="abs" style="left:979px;top:833px;width:99px;height:1px;background:#6a6a6a"></div>
<div class="abs" style="left:1027px;top:828px;width:5px;height:12px;background:#555"></div>
<div class="abs" style="left:1083px;top:833px;width:9px;height:1px;background:#333"></div>
<div class="abs" style="left:1087px;top:829px;width:1px;height:9px;background:#333"></div>
<div class="t st" style="left:1104px;top:826px;width:34px"><span style="transform: scaleX(1.0226);">100%</span></div>
<!-- scrollbar -->
<svg class="abs" style="left:1143px;top:184px" width="11" height="9" viewBox="0 0 11 9"><path d="M1 8 L5.5 1.5 L10 8 Z" fill="#6e6e6e"></path></svg>
<div class="abs" style="left:1144px;top:197px;width:9px;height:41px;border-radius:4.5px;background:#6e6e6e"></div>
<svg class="abs" style="left:1143px;top:810px" width="11" height="9" viewBox="0 0 11 9"><path d="M1 1 L5.5 7.5 L10 1 Z" fill="#6e6e6e"></path></svg>


<script>
(function(){
 var els=document.querySelectorAll('.t');
 for(var i=0;i<els.length;i++){
  var e=els[i]; var w=parseFloat(e.style.width); if(!w) continue;
  var s=e.firstElementChild;
  if(!s||s.tagName!=='SPAN'){ s=document.createElement('span'); s.innerHTML=e.innerHTML; e.innerHTML=''; e.appendChild(s);}
  s.style.transform='none';
  var n=s.getBoundingClientRect().width;
  if(n>0) s.style.transform='scaleX('+(w/n).toFixed(4)+')';
 }
})();

</script>
</body></html>
